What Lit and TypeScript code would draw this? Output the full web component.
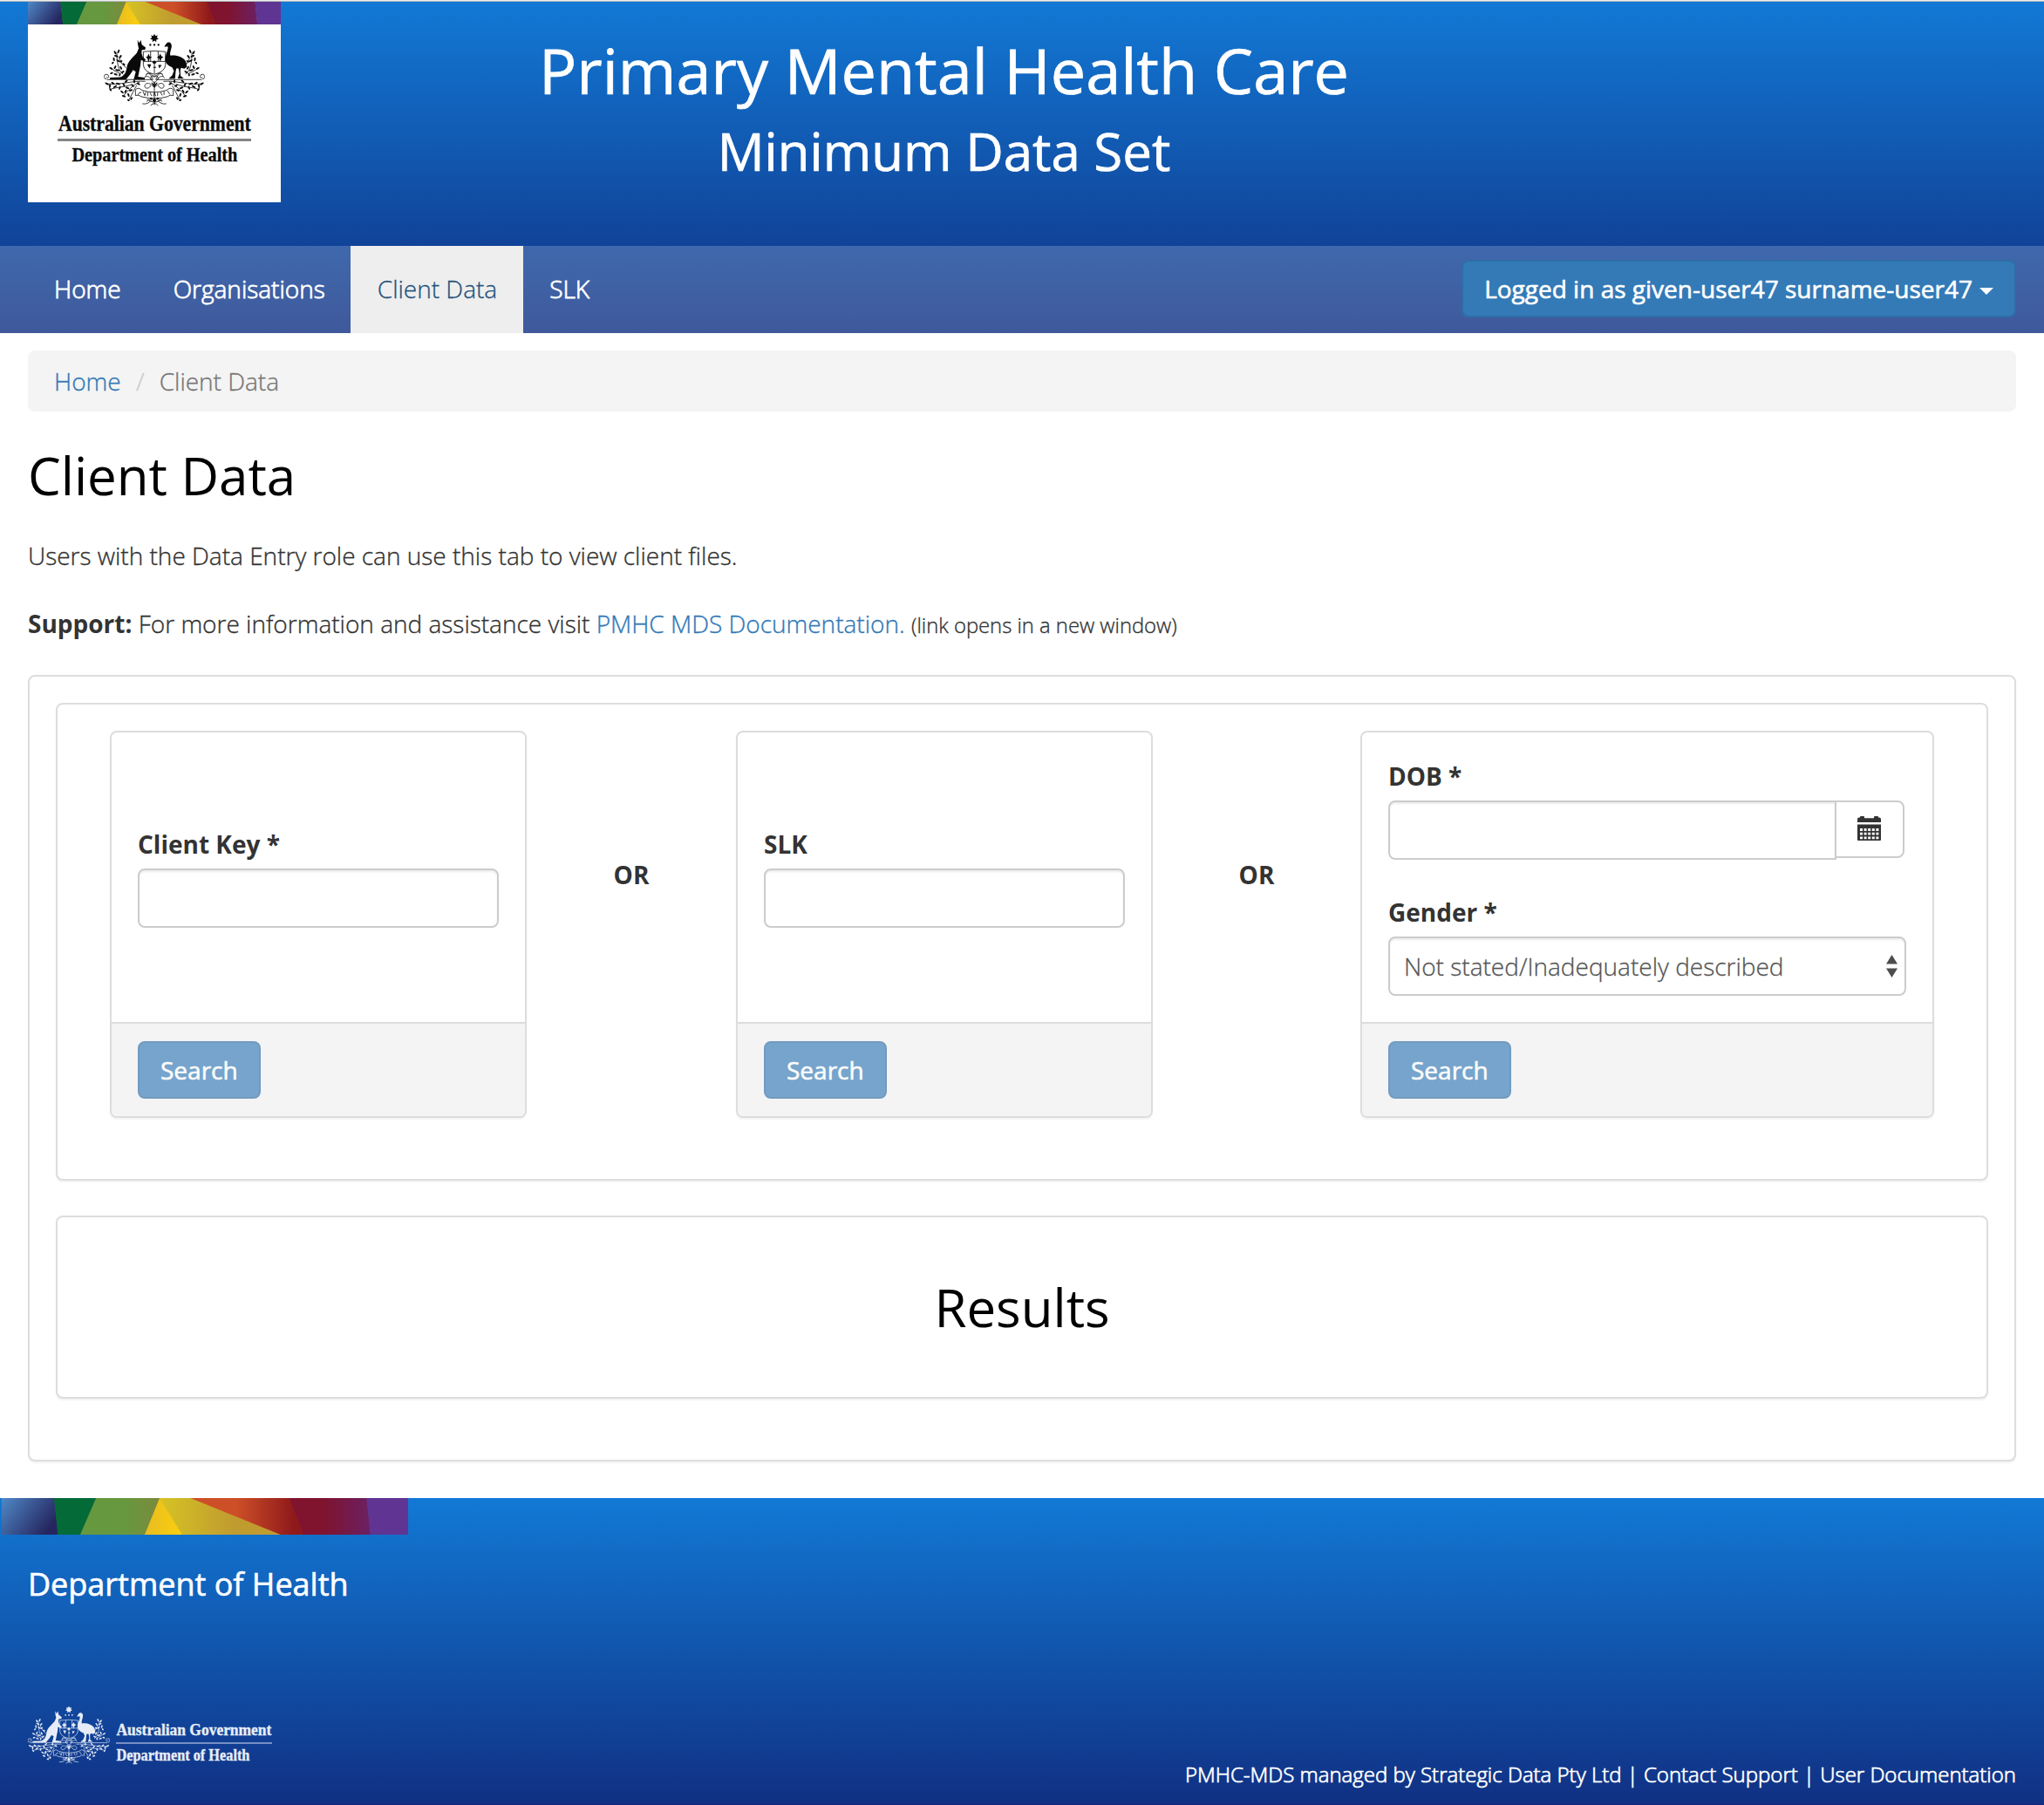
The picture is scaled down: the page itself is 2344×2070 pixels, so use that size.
import { LitElement, html, svg, css } from "lit";
import { customElement, property } from "lit/decorators.js";

// Leaves of the wattle on one side of the crest: x, y, rotation, half length.
const LEAVES: number[][] = [
  [66, 78, 60, 6], [78, 74, 110, 6], [70, 90, 20, 7], [84, 92, 130, 6], [62, 101, 80, 6], [76, 106, 30, 6], [86, 108, 150, 5],
  [58, 113, 130, 4], [96, 118, 40, 5], [52, 132, 30, 6], [66, 128, 120, 6], [74, 138, 10, 7], [86, 130, 60, 6], [92, 144, 150, 6],
  [54, 148, 160, 5], [68, 152, 20, 6], [82, 154, 100, 4],
  [38, 184, 30, 7], [48, 192, 100, 6], [58, 182, 40, 6], [66, 194, 150, 7], [50, 204, 50, 5], [76, 184, 20, 7], [82, 198, 110, 6],
  [96, 188, 60, 6], [104, 176, 140, 6], [108, 198, 20, 6], [90, 212, 40, 6], [102, 210, 120, 6], [96, 226, 20, 6], [112, 222, 70, 6],
  [120, 206, 160, 6], [126, 190, 40, 6], [122, 234, 120, 5], [132, 176, 90, 6], [146, 184, 30, 6], [112, 240, 20, 4],
];

const starPoints = Array.from({ length: 14 }, (_, i) => {
  const r = i % 2 ? 8.5 : 15;
  const a = (Math.PI * i) / 7 - Math.PI / 2;
  return `${(201 + r * Math.cos(a)).toFixed(1)},${(29 + r * Math.sin(a)).toFixed(1)}`;
}).join(" ");

const foliage = () => svg`
  ${LEAVES.map(([x, y, a, r]) => svg`<ellipse cx=${x} cy=${y} rx=${r + 0.6} ry="3" transform="rotate(${a} ${x} ${y})"/>`)}
  <g class="line">
    <path d="M94 152C76 140 72 110 72 76M86 150C72 146 60 138 52 130M104 130C94 122 84 112 80 96"/>
    <path d="M170 176C130 172 80 190 38 184M150 178C126 190 110 206 94 226M120 188C96 196 70 196 52 202M140 190C130 206 124 220 114 238"/>
    <path d="M36 168a8 8 0 1 1 8-9c0 5-5 6-8 3M38 170H196"/>
    <path d="M196 170C184 140 176 148 170 160M200 196C182 176 168 182 168 192s16 10 20-2M190 168c-8 -10 -16 -12 -24 -4"/>
    <path d="M201 158c-12-2-16 8-10 14s10 4 10 20M172 152c10-8 20-2 28 10"/>
  </g>`;

const crest = (x: number, y: number, w: number, h: number, color: string) => svg`
  <svg x=${x} y=${y} width=${w} height=${h} viewBox="28 12 346 252" preserveAspectRatio="none">
    <g fill=${color} stroke="none" style="color:${color}">
      <polygon points=${starPoints}/>
      <circle cx="187" cy="52" r="3.4"/><circle cx="201" cy="52" r="3.4"/><circle cx="215" cy="52" r="3.4"/>
      <path d="M143 35L149 46L154 35L158 51L171 61L169 68L158 69L157 80L161 93L171 102L168 108L155 103L153 122L149 142L145 160L168 163V169H130L137 143L128 137L118 152L104 169H48V163L84 162C100 156 104 144 107 125C111 106 128 95 141 79L147 64L144 50Z"/>
      <path d="M252 43C243 42 240 50 235 59L247 57C250 68 240 80 238 98C237 115 250 124 262 128L268 140L262 156L250 167H272L274 145L276 132L284 132L287 150L281 166H302L291 157L290 138L293 130L304 133L313 127L309 108C300 92 275 85 256 88C252 80 262 62 260 52C258 46 255 43 252 43Z"/>
      <path d="M181 82l4 9 8 3-8 4-4 14-4-14-6-4 6-3zM221 82l4 8 7 4-7 4-4 12-4-12-7-4 7-4zM176 118l14 0-6 14zM196 130q6-9 12 0zM214 120l12 0-8 12zM193 112l8-7 8 7-8 5z"/>
      <g class="line">
        <path d="M163 75q38-5 76 0V120q-2 24-38 32q-36-8-38-32ZM163 108H239M188 74V108M214 74V108M201 108V150"/>
        <path d="M136 204q10 -10 22 2q42 14 86 0q12 -12 22 -2v20q-12 -4 -20 4q-44 12 -90 0q-8 -8 -20 -4ZM144 222q6-12 12 -8M162 210l6 14 4-12M178 212v14M186 214l6 12M198 226l3-12 5 12M212 214v12M222 212l6 12M234 210v12M246 208l8 12" />
        <path d="M201 176V256M160 252q18 4 32-14M242 252q-18 4-32-14M174 244q14 -10 20 -8M228 244q-14-10-20-8M176 236q26 22 50 0M188 258q14-14 26 0"/>
      </g>
      <circle cx="201" cy="240" r="6"/><circle cx="190" cy="234" r="3.5"/><circle cx="212" cy="234" r="3.5"/>
      <path d="M190 180l11 18 11-18-4 0-7 9-7-9z"/>
      ${foliage()}
      <g transform="translate(402 0) scale(-1 1)">${foliage()}</g>
    </g>
  </svg>`;

const ribbon = (id: string) => svg`
  <defs>
    <linearGradient id="${id}a" x1="0" y1="0" x2="1" y2=".5"><stop offset="0" stop-color="#5089c8"/><stop offset="1" stop-color="#25265f"/></linearGradient>
    <linearGradient id="${id}b"><stop offset=".55" stop-color="#66983f"/><stop offset="1" stop-color="#7c8a3c"/></linearGradient>
    <linearGradient id="${id}c"><stop offset="0" stop-color="#e8bb22"/><stop offset="1" stop-color="#fbd00e"/></linearGradient>
    <linearGradient id="${id}d"><stop offset="0" stop-color="#d6c324"/><stop offset=".6" stop-color="#c09c2f"/></linearGradient>
    <linearGradient id="${id}e"><stop offset=".4" stop-color="#cd4f27"/><stop offset=".9" stop-color="#901a1b"/></linearGradient>
    <linearGradient id="${id}f"><stop offset=".4" stop-color="#80132d"/><stop offset="1" stop-color="#6b2063"/></linearGradient>
  </defs>
  <rect width="870" height="78" fill="#c09c2f"/>
  <polygon points="0,0 113,0 121,78 0,78" fill="url(#${id}a)"/>
  <polygon points="112,0 203,0 169,78 120,78" fill="#046a38"/>
  <polygon points="202,0 339,0 307,78 168,78" fill="url(#${id}b)"/>
  <polygon points="338,0 405,0 600,78 385,78" fill="url(#${id}d)"/>
  <polygon points="338,0 386,78 306,78" fill="url(#${id}c)"/>
  <polygon points="404,0 618,0 648,78 597,78" fill="url(#${id}e)"/>
  <polygon points="616,0 782,0 790,78 646,78" fill="url(#${id}f)"/>
  <polygon points="781,0 870,0 870,78 789,78" fill="#5f3492"/>`;

const base = css`
  :host { display: block; box-sizing: border-box; }
  *, *::before, *::after { box-sizing: border-box; }
  a { text-decoration: none; }
`;

const graphic = css`
  svg { display: block; }
  .line { fill: none; stroke: currentColor; stroke-width: 2.4; }
  .gov { font-family: "Liberation Serif", "Times New Roman", serif; font-weight: 700; stroke: currentColor; stroke-width: .35px; fill: currentColor; }
  .dark { color: #0a0a0a; }
  .light { color: #e9eef8; }
`;

@customElement("pmhc-header")
export class PmhcHeader extends LitElement {
  static styles = [base, graphic, css`
    .edge { height: 2px; background: linear-gradient(#eeeeee 50%, #b4babd 50%); }
    .banner { height: 380px; background: linear-gradient(#1279d5, #103083); color: #fff; display: flex; flex-direction: column; }
    .masthead { height: 280px; padding-left: 32px; display: flex; }
    .titles { width: 1521px; padding-top: 39px; text-align: center; -webkit-text-stroke: .7px #fff; }
    .title { margin: 0; font-size: 72px; line-height: 79px; font-weight: 400; }
    .subtitle { margin: 20px 0 0; font-size: 60px; line-height: 66px; font-weight: 400; }
    .nav { height: 100px; padding: 0 32px; background: rgba(255,255,255,.2); display: flex; justify-content: space-between; }
    .tabs { display: flex; }
    .tab { padding: 29px 30px 31px; color: #fff; -webkit-text-stroke: .8px #fff; }
    .tab.active { margin-left: -.8px; padding-left: 30.8px; background: #eee; color: #23527c; -webkit-text-stroke: .3px #23527c; }
    .user { margin-top: 16px; height: 66px; display: flex; align-items: center; gap: 8px; padding: 0 24px; font: inherit; font-weight: 400;
      color: #fff; background: #337ab7; border: 2px solid #2e6da4; border-radius: 8px; white-space: nowrap; -webkit-text-stroke: .6px #fff; }
    .caret { border-top: 8px solid #fff; border-left: 8px solid transparent; border-right: 8px solid transparent; margin-top: 6px; }
  `];
  render() {
    return html`
      <div class="edge"></div>
      <div class="banner">
        <div class="masthead">
          <svg width="290" height="230" viewBox="0 0 290 230">
            <rect width="290" height="230" fill="#fff"/>
            <svg width="290" height="26" viewBox="0 0 870 78" preserveAspectRatio="none">${ribbon("h")}</svg>
            ${crest(87.3, 36, 115.5, 85, "#0a0a0a")}
            <text class="gov dark" transform="translate(35 147.6) scale(.867 1)" font-size="25">Australian Government</text>
            <rect x="34" y="157" width="222" height="3" fill="#858585"/>
            <text class="gov dark" transform="translate(50.5 183.4) scale(.861 1)" font-size="23.5">Department of Health</text>
          </svg>
          <div class="titles">
            <h1 class="title">Primary Mental Health Care</h1>
            <h2 class="subtitle">Minimum Data Set</h2>
          </div>
        </div>
        <nav class="nav">
          <div class="tabs">
            <a class="tab">Home</a><a class="tab">Organisations</a><a class="tab active">Client Data</a><a class="tab">SLK</a>
          </div>
          <button class="user">Logged in as given-user47 surname-user47<span class="caret"></span></button>
        </nav>
      </div>`;
  }
}

@customElement("search-card")
export class SearchCard extends LitElement {
  static styles = [base, css`
    :host { display: flex; flex-direction: column; height: 444px; border: 2px solid #ddd; border-radius: 8px; background: #fff;
      box-shadow: 0 2px 2px rgba(0,0,0,.05); overflow: hidden; }
    .body { flex: 1; padding: 0 30px; display: flex; flex-direction: column; justify-content: center; }
    .foot { height: 108px; padding: 20px 30px 0; background: #f4f4f4; border-top: 2px solid #ddd; }
    .search { height: 66px; padding: 0 24px; font: inherit; font-weight: 400; color: #fff; background: #337ab7; border: 2px solid #2e6da4;
      border-radius: 8px; opacity: .65; display: block; -webkit-text-stroke: .6px #fff; }
  `];
  render() {
    return html`
      <div class="body"><slot></slot></div>
      <div class="foot"><button class="search">Search</button></div>`;
  }
}

@customElement("form-field")
export class FormField extends LitElement {
  @property() label = "";
  @property() kind: "text" | "date" | "select" = "text";
  static styles = [base, css`
    .label { display: block; font-weight: 700; margin-bottom: 8px; line-height: 40px; }
    .control { display: block; width: 100%; height: 68px; padding: 0 16px; font: inherit; color: #555; background: #fff; border: 2px solid #ccc;
      border-radius: 8px; box-shadow: inset 0 2px 2px rgba(0,0,0,.075); appearance: none; -webkit-text-stroke: .3px #555; }
    .group { display: flex; align-items: flex-start; padding-right: 2px; }
    .group .control { width: auto; flex: 1; min-width: 0; border-radius: 8px 0 0 8px; }
    .pick { width: 80px; height: 66px; margin-left: -2px; background: transparent; border: 2px solid #ccc; border-radius: 0 8px 8px 0; padding: 0;
      display: flex; align-items: center; justify-content: center; }
    .pick svg { margin: 0 1px 2px 0; }
    .select { position: relative; }
    .arrows { position: absolute; right: 10px; top: 21px; }
  `];
  render() {
    const control = this.kind === "date"
      ? html`<div class="group"><input class="control" aria-label=${this.label}>
          <button class="pick" aria-label="calendar"><svg width="27" height="28" viewBox="0 0 27 28" fill="#333">
            <path d="M0 7V3.5Q0 1.5 2 1.5H3V1Q3 0 4 0H7Q8 0 8 1V2.2H19V1Q19 0 20 0H23Q24 0 24 1V1.5H25Q27 1.5 27 3.5V7Z"/>
            <path fill-rule="evenodd" d="M0 9.5H27V27Q27 28 26 28H1Q0 28 0 27ZM3 14V17H6V14ZM7.6 14V17H10.6V14ZM12.2 14V17H15.2V14ZM16.8 14V17H19.8V14ZM21.4 14V17H24.4V14ZM3 18.8V21.6H6V18.8ZM7.6 18.8V21.6H10.6V18.8ZM12.2 18.8V21.6H15.2V18.8ZM16.8 18.8V21.6H19.8V18.8ZM21.4 18.8V21.6H24.4V18.8ZM3 23.4V26.2H6V23.4ZM7.6 23.4V26.2H10.6V23.4ZM12.2 23.4V26.2H15.2V23.4ZM16.8 23.4V26.2H19.8V23.4ZM21.4 23.4V26.2H24.4V23.4Z"/>
          </svg></button></div>`
      : this.kind === "select"
        ? html`<div class="select"><select class="control" aria-label=${this.label}><option>Not stated/Inadequately described</option></select>
            <svg class="arrows" width="13" height="26" viewBox="0 0 13 26" fill="#4d4d4d"><path d="M6.5 0L13 10.5H0ZM6.5 26L13 15.5H0Z"/></svg></div>`
        : html`<input class="control" aria-label=${this.label}>`;
    return html`<span class="label">${this.label}</span>${control}`;
  }
}

@customElement("pmhc-footer")
export class PmhcFooter extends LitElement {
  static styles = [base, graphic, css`
    :host { height: 352px; background: linear-gradient(#1279d5, #103083); color: #fff; border-bottom: 1px solid #12267c; display: flex; flex-direction: column; }
    .ribbon { margin-left: 2px; }
    .dept { margin: 37px 32px 0; font-size: 36px; line-height: 40px; font-weight: 400; -webkit-text-stroke: .6px #fff; }
    .bottom { margin-top: 113px; padding: 0 32px; display: flex; justify-content: space-between; }
    .links { margin-top: 68px; font-size: 24px; line-height: 34px; -webkit-text-stroke: .7px #fff; white-space: pre; }
  `];
  render() {
    return html`
      <svg class="ribbon" width="466" height="42" viewBox="0 0 870 78" preserveAspectRatio="none">${ribbon("f")}</svg>
      <h3 class="dept">Department of Health</h3>
      <div class="bottom">
        <svg width="300" height="80" viewBox="0 0 300 80">
          ${crest(0, 6, 94, 68, "#e6ecf7")}
          <text class="gov light" transform="translate(101.5 39.5) scale(.919 1)" font-size="19">Australian Government</text>
          <rect x="101" y="48" width="179" height="2" fill="#7890c4"/>
          <text class="gov light" transform="translate(101.5 68.5) scale(.858 1)" font-size="19">Department of Health</text>
        </svg>
        <div class="links">PMHC-MDS managed by Strategic Data Pty Ltd | Contact Support | User Documentation</div>
      </div>`;
  }
}

@customElement("app-root")
export class AppRoot extends LitElement {
  static styles = [base, css`
    :host { width: 2344px; height: 2070px; overflow: hidden; background: #fff; color: #333; display: flex; flex-direction: column;
      font: 300 28px/40px "Open Sans", "Noto Sans", sans-serif; }
    .content { padding: 20px 32px 0; height: 1336px; }
    .crumbs { height: 70px; padding: 15px 30px; background: #f4f4f4; border-radius: 8px; display: flex; }
    .crumbs, .lead, .support { -webkit-text-stroke: .35px currentColor; }
    .crumbs a, .link { color: #337ab7; }
    .sep { width: 44px; text-align: center; color: #ccc; }
    .current { color: #777; }
    .heading { margin: 40px 0 0; font-size: 60px; line-height: 66px; font-weight: 400; color: #000; }
    .lead { margin: 39px 0 0; }
    .support { margin: 38px 0 0; height: 40px; }
    .support b { font-weight: 700; -webkit-text-stroke: 0; }
    .note { font-size: 23.8px; line-height: 1; }
    .panel { border: 2px solid #ddd; border-radius: 8px; background: #fff; box-shadow: 0 2px 2px rgba(0,0,0,.05); }
    .outer { margin-top: 39px; height: 902px; padding: 30px; }
    .filters { height: 548px; padding: 30px 60px 0; display: grid; grid-template-columns: 478px 240px 478px 238px 658px; align-items: start; }
    .or { height: 330px; display: flex; align-items: center; justify-content: center; font-weight: 700; }
    .gap { margin-top: 40px; }
    .results { margin-top: 40px; height: 210px; padding-bottom: 1px; display: flex; align-items: center; justify-content: center; }
    .results h2 { margin: 0; font-size: 60px; line-height: 66px; font-weight: 400; color: #000; }
  `];
  render() {
    return html`
      <pmhc-header></pmhc-header>
      <main class="content">
        <div class="crumbs"><a>Home</a><span class="sep">/</span><span class="current">Client Data</span></div>
        <h1 class="heading">Client Data</h1>
        <p class="lead">Users with the Data Entry role can use this tab to view client files.</p>
        <p class="support"><b>Support:</b> For more information and assistance visit <a class="link">PMHC MDS Documentation.</a> <span class="note">(link opens in a new window)</span></p>
        <section class="panel outer">
          <div class="panel filters">
            <search-card><form-field label="Client Key *"></form-field></search-card>
            <div class="or">OR</div>
            <search-card><form-field label="SLK"></form-field></search-card>
            <div class="or">OR</div>
            <search-card>
              <form-field label="DOB *" kind="date"></form-field>
              <form-field class="gap" label="Gender *" kind="select"></form-field>
            </search-card>
          </div>
          <div class="panel results"><h2>Results</h2></div>
        </section>
      </main>
      <pmhc-footer></pmhc-footer>`;
  }
}
